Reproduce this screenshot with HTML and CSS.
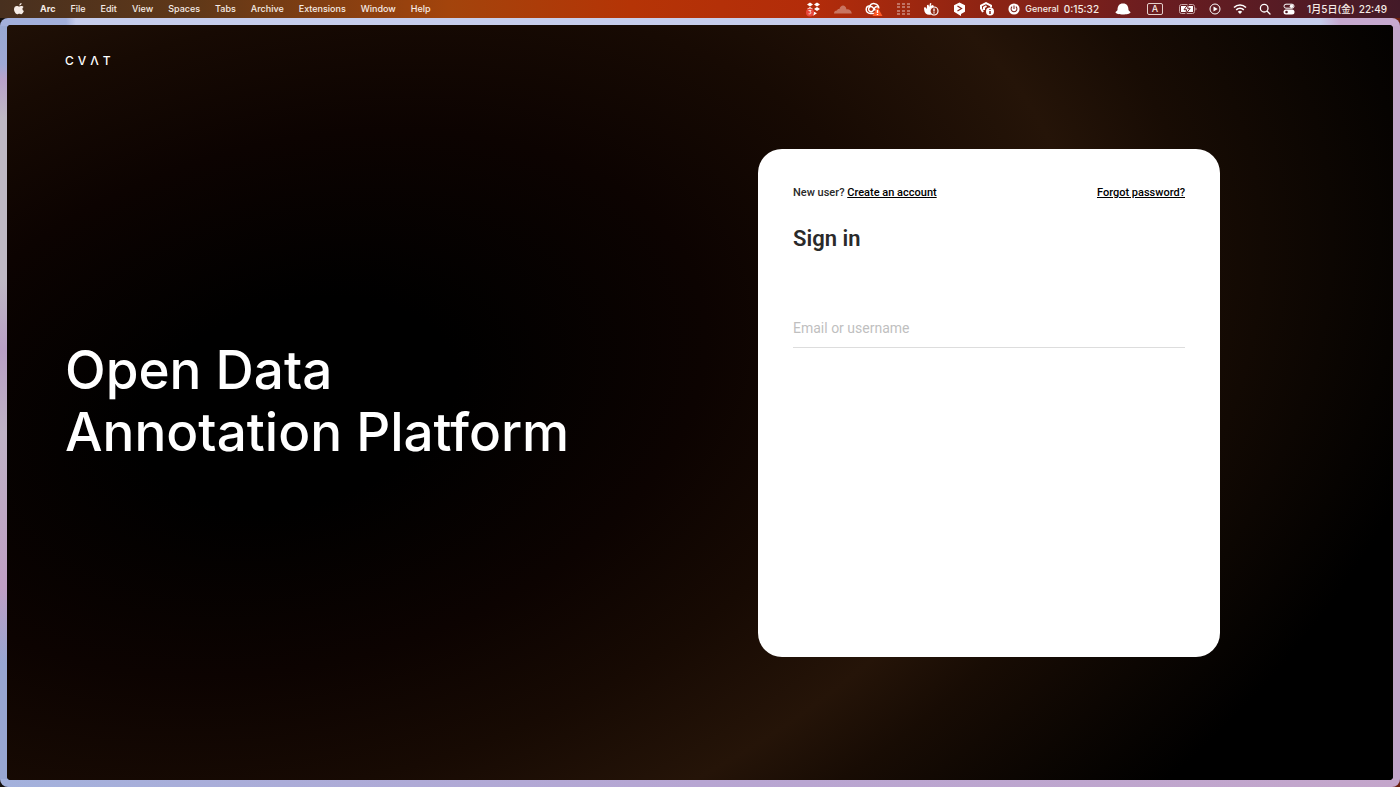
FILE: index.html
```html
<!DOCTYPE html>
<html lang="en">

<head>
    <meta charset="UTF-8">
    <title>CVAT</title>
    <link rel="stylesheet" href="styles.css">
</head>

<body>
    <header class="menubar">
        <nav class="menu">
            <svg class="icon apple" viewBox="0 0 12 14" width="12" height="14" fill="currentColor">
                <path d="M8.600 1c.1 1.200-.9 2.500-2.200 2.500C6.200 2.300 7.300 1.100 8.600 1zM10.500 5.100c-1.600 1-1.400 3.200.4 4-.5 1.500-1.500 3.100-2.500 3.100-.8 0-1.100-.5-2.100-.5s-1.300.5-2.100.5C2.800 12.200 1 9.600 1 7.300c0-2.200 1.400-3.400 2.800-3.400 1 0 1.700.6 2.400.6.600 0 1.400-.7 2.600-.6.700 0 1.300.4 1.700 1.200z" />
            </svg>
            <a class="menu-item app-name" href="#">Arc</a>
            <a class="menu-item" href="#">File</a>
            <a class="menu-item" href="#">Edit</a>
            <a class="menu-item" href="#">View</a>
            <a class="menu-item" href="#">Spaces</a>
            <a class="menu-item" href="#">Tabs</a>
            <a class="menu-item" href="#">Archive</a>
            <a class="menu-item" href="#">Extensions</a>
            <a class="menu-item" href="#">Window</a>
            <a class="menu-item" href="#">Help</a>
        </nav>
        <div class="status">
            <div class="apps">
                <!-- Dropbox -->
                <svg class="icon" viewBox="0 0 16 16" width="16" height="16">
                    <path fill="#fff" d="M5 1.500l3 2-3 2-3-2zM12 1.500l3 2-3 2-3-2zM5 6l3 2-3 2-3-2zM12 6l3 2-3 2-3-2zM8.500 10.500l3.500 1.800-3.500 2.200L5 12.300z" />
                    <circle cx="5" cy="11.500" r="4" fill="#e8463a" />
                    <path fill="none" stroke="#ffd9cf" d="M3.500 9.500h2.500l-1.200 1.500c2 0 1.600 2.300-1.200 1.800" />
                </svg>
                <!-- Cloud -->
                <svg class="icon faded" viewBox="0 0 18 14" width="18" height="14" fill="#fff">
                    <path d="M0 11.500c0-2 1.300-3 3-2.900.2-1.500 1.500-2 2.400-1.500C6.500 2.700 11.500 2 12.500 7.400c3-.4 5 1.400 5.300 4.100z" />
                </svg>
                <!-- Creative Cloud -->
                <svg class="icon" viewBox="0 0 18 16" width="18" height="16">
                    <path fill="none" stroke="#fff" stroke-width="1.500" d="M10 12.500H5.500C2.700 12.500 1.200 10.700 1.200 8.600c0-2 1.500-3.600 3.500-3.800C6 2.700 8 2.200 9.800 2.700c2.400.6 4 2.500 4 4.800M10.500 9.500L7.600 6.300C5.700 4.700 3.500 6.200 3.600 8.400c.2 2.400 2.900 2.900 4.400 1.300l1.900-3c1-1.500 3-1 3.300.8" />
                    <path fill="#ff5a26" d="M12.500 6l5 9H7.500z" />
                    <path stroke="#fff" stroke-width="1.400" d="M12.500 9v3M12.500 13v1" />
                </svg>
                <!-- App grid -->
                <svg class="icon faded" viewBox="0 0 14 14" width="14" height="14" fill="#fff">
                    <path d="M1 1h3v2H1zM6 1h3v2H6zM11 1h3v2h-3zM1 4h3v2H1zM6 4h3v2H6zM11 4h3v2h-3zM1 8h3v2H1zM6 8h3v2H6zM11 8h3v2h-3zM1 11h3v2H1zM6 11h3v2H6zM11 11h3v2h-3z" />
                </svg>
                <!-- Hand with alert -->
                <svg class="icon" viewBox="0 0 16 16" width="16" height="16">
                    <path fill="#fff" d="M7 2l1.500.5-.8 2.200L10 4l1 1.500-2 1.200-1 6.800C4.500 14.500 1.500 12.500 1.200 9L1 6.500l1.500-.3L3.800 8 4 4l1.500-.3L6.200 6z" />
                    <circle cx="11" cy="10" r="4" fill="#922b16" stroke="#fff" stroke-width="1.200" />
                    <path stroke="#fff" stroke-width="1.300" d="M11 7.500v3M11 11.300v1.200" />
                </svg>
                <!-- Hexagon badge -->
                <svg class="icon" viewBox="0 0 14 16" width="14" height="16">
                    <path fill="#fff" d="M7.500 1.500l5.500 2.700v6.600L9 13v2l-2.500-1.500L2 10.800V4.200z" />
                    <path fill="none" stroke="#85251b" stroke-width="1.200" d="M5.500 5l4 2.500-4 2.500" />
                </svg>
                <!-- Shield with info -->
                <svg class="icon" viewBox="0 0 16 16" width="16" height="16">
                    <path fill="none" stroke="#fff" stroke-width="2" d="M4 11L2 7.500V4.500L7 2l5 2.500v2M5 9V6.500l2.500-1.500" />
                    <circle cx="11" cy="10.500" r="4" fill="#fff" />
                    <path stroke="#85251b" stroke-width="1.500" d="M11 8v1M11 10v3" />
                </svg>
                <div class="timer">
                    <svg class="icon" viewBox="0 0 14 14" width="12" height="12">
                        <circle cx="7" cy="7" r="6.500" fill="#fff" />
                        <path fill="none" stroke="#7d211c" stroke-width="1.200" d="M7 3v4M4.800 4.300a3.400 3.400 0 1 0 4.400 0" />
                    </svg>
                    <span>General</span>
                    <span class="digits">0:15:32</span>
                </div>
            </div>
            <!-- Hat -->
            <svg class="icon" viewBox="0 0 16 14" width="16" height="14" fill="#fff">
                <path d="M.5 10.500c.2-1.500 1.600-1 2-2.500C2.700 4 4 1.500 8 1.500S13.300 4 13.500 8c.4 1.500 1.800 1 2 2.500-1 2.600-14 2.600-15 0z" />
            </svg>
            <span class="input-source">A</span>
            <!-- Battery -->
            <svg class="icon battery" viewBox="0 0 18 12" width="18" height="12">
                <rect x=".5" y="1.500" width="15" height="9" rx="2" fill="none" stroke="#c9a5a5" />
                <rect x="2" y="3" width="12" height="6" fill="#fff" />
                <path fill="#c9a5a5" d="M16.500 4.500c1.300.3 1.300 2.700 0 3z" />
                <path fill="#fff" stroke="#6a1f22" d="M9.500.8L5 6.700h2.600L6.800 11l4.400-5.700H8.600z" />
            </svg>
            <!-- Play -->
            <svg class="icon" viewBox="0 0 12 12" width="12" height="12">
                <circle cx="6" cy="6" r="5" fill="none" stroke="#fff" />
                <path fill="#fff" d="M4.500 3.500v5L8.700 6z" />
            </svg>
            <!-- Wi-Fi -->
            <svg class="icon" viewBox="0 0 14 12" width="14" height="12">
                <path fill="none" stroke="#fff" stroke-width="1.600" d="M1 4.500c3.500-3.300 8.500-3.300 12 0M3.200 6.900c2.200-2 5.400-2 7.600 0" />
                <path fill="#fff" d="M4.800 8.700c1.300-1.200 3.100-1.200 4.400 0L7 11z" />
            </svg>
            <!-- Search -->
            <svg class="icon" viewBox="0 0 12 12" width="12" height="12">
                <path fill="none" stroke="#fff" stroke-width="1.300" stroke-linecap="round" d="M8 8l3 3M9 5.200A3.800 3.800 0 1 1 1.400 5.200 3.800 3.800 0 0 1 9 5.200" />
            </svg>
            <!-- Control center -->
            <svg class="icon" viewBox="0 0 12 12" width="12" height="12">
                <rect x="1" y="1.200" width="10" height="4" rx="2" fill="none" stroke="#fff" />
                <circle cx="8.500" cy="3.200" r="1.700" fill="#fff" />
                <rect x=".5" y="6.500" width="11" height="5" rx="2.500" fill="#fff" />
                <circle cx="3.500" cy="9" r="1.300" fill="#511b25" />
            </svg>
            <div class="clock">
                <span>1月5日(金)</span>
                <span>22:49</span>
            </div>
        </div>
    </header>

    <div class="window">
        <main class="page">
            <section class="intro">
                <div class="logo"><span>C</span><span>V</span><span>Λ</span><span>T</span></div>
                <h1 class="headline">Open Data<br>Annotation Platform</h1>
            </section>
            <section class="signin">
                <form class="card">
                    <div class="card-links">
                        <p class="new-user">New user? <a href="#">Create an account</a></p>
                        <a href="#">Forgot password?</a>
                    </div>
                    <h2 class="card-title">Sign in</h2>
                    <input class="credential" type="text" placeholder="Email or username" aria-label="Email or username">
                </form>
            </section>
        </main>
    </div>
</body>

</html>
```
FILE: styles.css
```css
* {
    box-sizing: border-box;
}

body {
    margin: 0;
    min-height: 100vh;
    display: flex;
    flex-direction: column;
    font-family: Roboto, "Liberation Sans", sans-serif;
    background: linear-gradient(90deg, #15110f, #6b2010);
}

a {
    color: inherit;
}

/* Menu bar */
.menubar {
    height: 18px;
    display: flex;
    align-items: center;
    justify-content: space-between;
    padding: 0 13px 1px;
    color: #f6ece6;
    font-family: Inter, "Noto Sans CJK JP", sans-serif;
    font-size: 9px;
    font-weight: 500;
    line-height: 16px;
    white-space: nowrap;
    background: linear-gradient(90deg, #48301f 0%, #603818 14%, #a3440c 32%, #b53406 45%, #b32c0a 58%, #8f2413 70%, #6c1d20 82%, #431a28 100%);
}

.menu {
    display: flex;
    align-items: center;
    gap: 15px;
}

.menu-item {
    text-decoration: none;
}

.app-name {
    font-weight: 700;
}

.icon {
    display: block;
    flex: none;
}

.faded {
    opacity: 0.35;
}

.status {
    display: flex;
    align-items: center;
    gap: 12px;
}

.apps {
    display: flex;
    align-items: center;
    gap: 13px;
    margin-right: 4px;
}

.timer {
    display: flex;
    align-items: center;
    gap: 5px;
}

.digits {
    font-size: 10px;
}

.input-source {
    width: 16px;
    height: 12px;
    margin: 0 4px;
    border: 1px solid #e5cfcb;
    border-radius: 2px;
    font-size: 9px;
    line-height: 10px;
    text-align: center;
}

.clock {
    display: flex;
    gap: 4px;
    font-size: 10px;
}

/* Browser window */
.window {
    flex: 1;
    display: flex;
    padding: 7px;
    border-radius: 8px;
    background: linear-gradient(90deg, #a3b0dc 0, #a3b0dc 66px, #c6cdec 76px, #c6cdec 1320px, #c6a9cf 1340px) top / 100% 8px no-repeat,
        linear-gradient(90deg, #a3b1dc, #b7a5d2 50%, #c4a6cb) bottom / 100% 8px no-repeat,
        linear-gradient(180deg, #98a9d2, #9fa9d6 6%, #b9a3cb 8%, #bfb9c4 13%, #bfb9c4 34%, #b9a0c6 43%, #bfb3c6 54%, #bf9fc4 74%, #98a6d2 84%) left / 8px 100% no-repeat,
        #c4a6cb;
}

.page {
    flex: 1;
    position: relative;
    isolation: isolate;
    overflow: hidden;
    display: grid;
    grid-template-columns: 1fr 1fr;
    padding: 0 58px;
    border-radius: 4px;
    background: #000;
}

/* Tilted brown glow behind the content */
.page::before {
    content: "";
    position: absolute;
    z-index: -1;
    top: 50%;
    left: 21%;
    width: 3200px;
    height: 3200px;
    transform: translate(-50%, -50%) rotate(-15deg);
    background: radial-gradient(ellipse 800px 500px, #000 0%, #000 20%, #0c0301 52%, #170a03 76%, #251408 100%, #180c04 114%, #000 150%);
}

.intro {
    display: grid;
    grid-template-rows: 1fr auto 1fr;
    padding-bottom: 4px;
    color: #fff;
}

.logo {
    display: flex;
    gap: 4px;
    padding-top: 28px;
    font-family: Inter, sans-serif;
    font-size: 12px;
    font-weight: 500;
    line-height: 16px;
}

.headline {
    margin: 0;
    font-family: Inter, sans-serif;
    font-size: 53px;
    font-weight: 500;
    line-height: 62px;
    white-space: nowrap;
}

.signin {
    display: flex;
    align-items: center;
    padding-left: 58px;
}

/* Sign in card */
.card {
    width: 462px;
    min-height: 508px;
    padding: 37px 35px;
    border-radius: 24px;
    background: #fff;
    color: #2a2a2a;
}

.card-links {
    display: flex;
    justify-content: space-between;
    font-size: 11px;
    font-weight: 500;
    line-height: 14px;
}

.card-links a {
    color: #000;
}

.new-user {
    margin: 0;
}

.card-title {
    margin: 24px 0 56px;
    font-size: 22px;
    font-weight: 600;
    line-height: 30px;
}

.credential {
    display: block;
    width: 100%;
    height: 38px;
    padding: 0;
    border: 0;
    border-bottom: 1px solid #ddd;
    outline: none;
    color: #2a2a2a;
    font-family: inherit;
    font-size: 14px;
}

.credential::placeholder {
    color: #bfbfbf;
}
```
